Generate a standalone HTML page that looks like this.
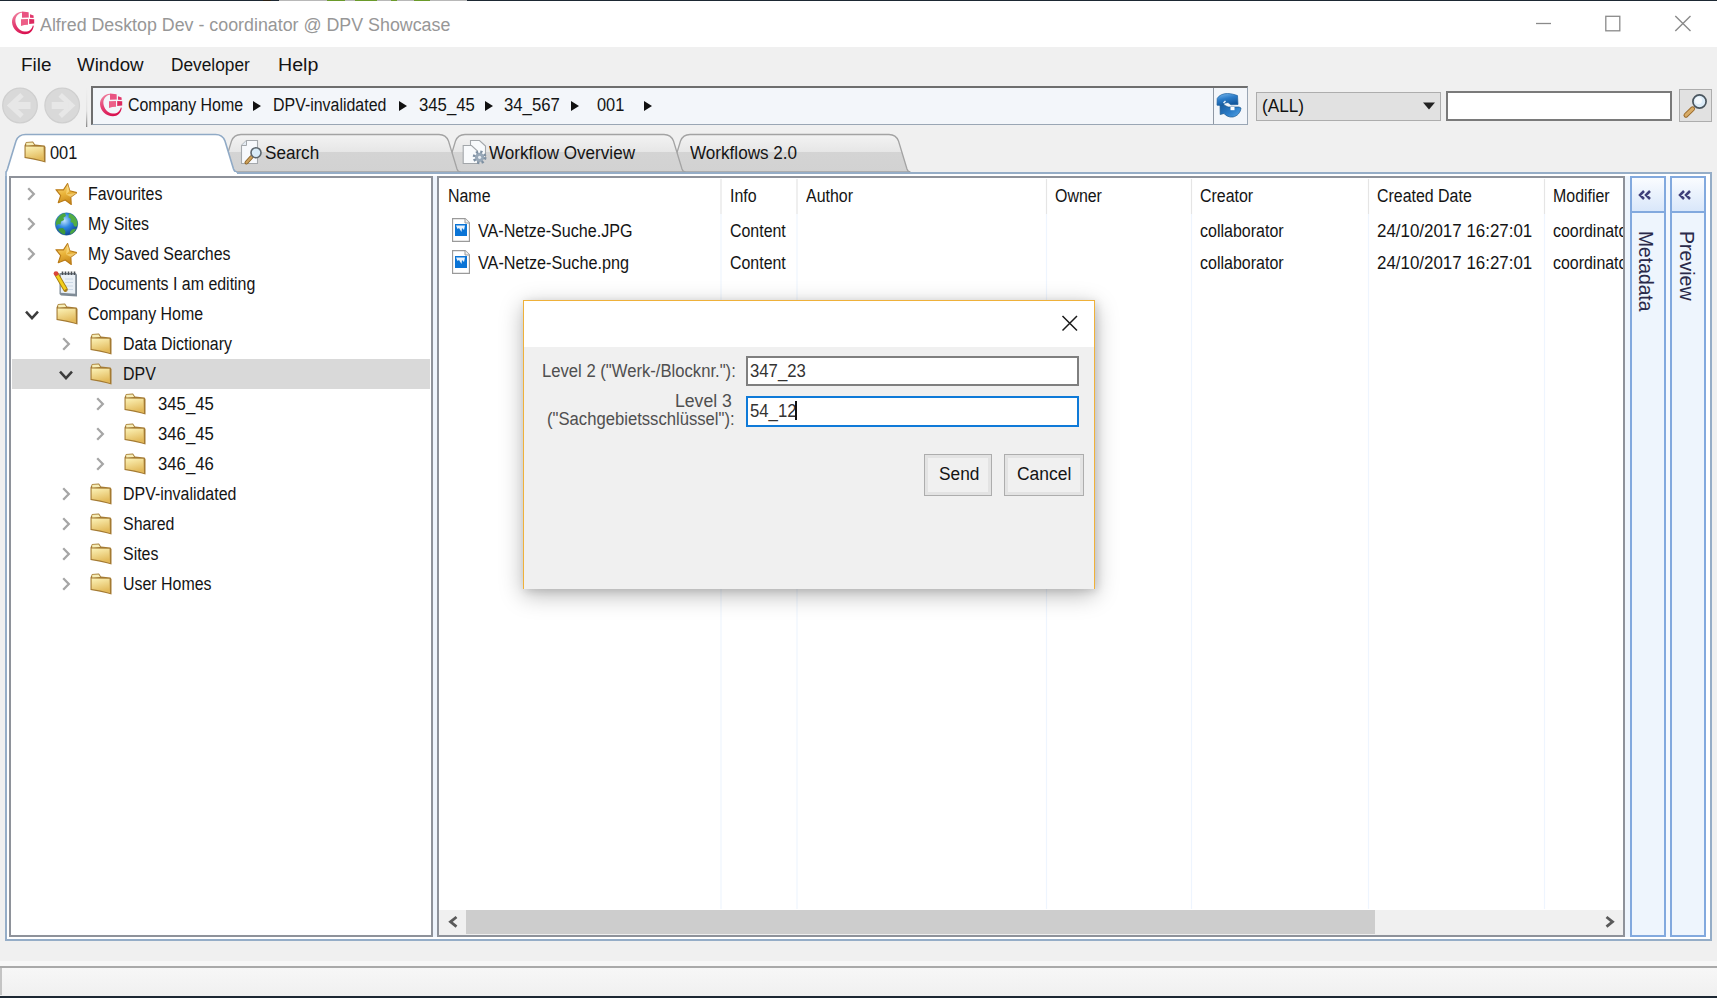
<!DOCTYPE html>
<html><head><meta charset="utf-8">
<style>
*{box-sizing:border-box;margin:0;padding:0}
html,body{width:1717px;height:998px;overflow:hidden;background:#f0f0f0;font-family:"Liberation Sans",sans-serif;color:#000}
.a{position:absolute}
.t{position:absolute;white-space:nowrap;font-size:18px;line-height:18px;transform-origin:0 0;transform:scaleX(.885);color:#141414}
svg{position:absolute;overflow:visible}
</style></head><body>
<svg width="0" height="0" style="left:0;top:0">
<defs>
 <linearGradient id="fgrad" x1="0" y1="0" x2="0.3" y2="1"><stop offset="0" stop-color="#fcf3b8"/><stop offset="1" stop-color="#e2b95a"/></linearGradient>
 <linearGradient id="tabg" x1="0" y1="0" x2="0" y2="1"><stop offset="0" stop-color="#f3f3f3"/><stop offset="0.47" stop-color="#e6e6e6"/><stop offset="0.47" stop-color="#d4d4d4"/><stop offset="1" stop-color="#d2d2d2"/></linearGradient>
 <radialGradient id="globeg" cx="0.4" cy="0.35" r="0.7"><stop offset="0" stop-color="#bfe3ff"/><stop offset="0.45" stop-color="#2d86e0"/><stop offset="1" stop-color="#0d3f8f"/></radialGradient>
 <linearGradient id="starg" x1="0" y1="0" x2="0.3" y2="1"><stop offset="0" stop-color="#fbe08a"/><stop offset="0.55" stop-color="#eab43a"/><stop offset="1" stop-color="#c98a1c"/></linearGradient>
 <linearGradient id="pinkg" x1="0.1" y1="0" x2="0.6" y2="1"><stop offset="0" stop-color="#f28aa6"/><stop offset="0.45" stop-color="#e44476"/><stop offset="1" stop-color="#d9104f"/></linearGradient>
 <linearGradient id="sideh" x1="0" y1="0" x2="0" y2="1"><stop offset="0" stop-color="#fafcff"/><stop offset="1" stop-color="#d8e6fa"/></linearGradient>
 <symbol id="folder" viewBox="0 0 22 22">
  <path d="M0.5,4.5 L2,1 L9,0.6 L11,3.6 L20.5,4.6 L21.5,6 L21.5,21.5 L17,20.3 Q9,18.2 0.5,17 Z" fill="#a47a32"/>
  <path d="M2.2,1.8 L8.6,1.4 L10.2,4 L2.2,4.4 Z" fill="#f6eeb8"/>
  <path d="M1.6,5.4 L19.6,5.8 L20,20 Q10,17.2 1.6,16 Z" fill="url(#fgrad)"/>
 </symbol>
 <symbol id="star" viewBox="0 0 22 24">
  <path d="M12.56,1.51 L14.75,8.72 L22.03,10.66 L15.85,14.97 L16.26,22.49 L10.25,17.95 L3.22,20.66 L5.68,13.54 L0.93,7.69 L8.46,7.83 Z" fill="url(#starg)" stroke="#b97a16" stroke-width="1.1" stroke-linejoin="round"/>
  <path d="M11,12.6 L12.56,1.51 L14.75,8.72 Z M11,12.6 L22.03,10.66 L15.85,14.97 Z" fill="#ffe89a" opacity="0.55"/>
 </symbol>
 <symbol id="logo" viewBox="0 0 24 24">
  <path d="M11,0.8 C5,1.2 0.6,6 1,11.5 C1.5,18 7,23.3 14,23.3 C18.5,23.3 22.2,20 22.8,14.8 L21.8,14.4 C21,18.6 17.6,20.8 13.6,20.4 C8.6,20 4.8,15.2 4.4,10.4 C4.1,6.2 6.6,2.4 11,1.8 Z" fill="url(#pinkg)"/>
  <path d="M11,0.6 L17.6,1.2 L17.8,6.6 L11,6.8 Z" fill="#e95382"/>
  <path d="M19,3.2 L22.6,4.4 L22.6,7 L19,6.8 Z" fill="#e2386c"/>
  <path d="M10,8.2 L17,8 L17,13.8 Q13,13.8 10,15 Z" fill="#ec5f88"/>
  <path d="M18.2,8 L23.2,8.2 L23.2,12.6 L18.2,12.9 Z" fill="#dd2a60"/>
 </symbol>
 <symbol id="imgdoc" viewBox="0 0 18 24">
  <path d="M0.5,0.5 L13,0.5 L17.5,5 L17.5,23.5 L0.5,23.5 Z" fill="#fff" stroke="#9a9a9a" stroke-width="1.3"/>
  <path d="M13,0.5 L13,5 L17.5,5" fill="#eee" stroke="#9a9a9a" stroke-width="1"/>
  <rect x="3" y="6" width="12" height="12" fill="#0a74d6"/>
  <path d="M4,7.5 L13,7.5 L12,12 L10,10 L9.5,14 L7,10 L5.5,11 Z" fill="#e8f2fb"/>
 </symbol>
 <symbol id="chev" viewBox="0 0 10 14">
  <path d="M2.2,1.3 L7.8,7 L2.2,12.7" fill="none" stroke="#a6a6a6" stroke-width="2.3"/>
 </symbol>
 <symbol id="chevd" viewBox="0 0 14 10">
  <path d="M1,1.6 L7,8.2 L13,1.6" fill="none" stroke="#3c3c3c" stroke-width="2.5"/>
 </symbol>
</defs></svg>

<!-- top dark line -->
<div class="a" style="left:0;top:0;width:1717px;height:1px;background:#1d2833"></div>
<div class="a" style="left:263px;top:0;width:8px;height:1px;background:#2a2014"></div>
<div class="a" style="left:279px;top:0;width:188px;height:1px;background:#b8b8b8"></div>
<div class="a" style="left:327px;top:0;width:18px;height:1px;background:#6a9a2a"></div>
<div class="a" style="left:355px;top:0;width:22px;height:1px;background:#6a9a2a"></div>
<div class="a" style="left:391px;top:0;width:6px;height:1px;background:#6a9a2a"></div>
<div class="a" style="left:414px;top:0;width:16px;height:1px;background:#6a9a2a"></div>
<!-- title bar -->
<div class="a" style="left:0;top:1px;width:1717px;height:46px;background:#fff"></div>
<svg style="left:11px;top:11px" width="24" height="24"><use href="#logo"/></svg>
<div class="t" style="left:40px;top:16px;color:#979797;transform:scaleX(.99)">Alfred Desktop Dev - coordinator @ DPV Showcase</div>
<svg style="left:1530px;top:10px" width="170" height="30">
 <path d="M6,13.5 H21" stroke="#8a8a8a" stroke-width="1.3"/>
 <rect x="75.8" y="6.3" width="14" height="14.5" fill="none" stroke="#8a8a8a" stroke-width="1.3"/>
 <path d="M145.3,6 L160.5,21 M160.5,6 L145.3,21" stroke="#8a8a8a" stroke-width="1.4"/>
</svg>

<!-- menu -->
<div class="t" style="left:21px;top:56px;transform:scaleX(1.05)">File</div>
<div class="t" style="left:77px;top:56px;transform:scaleX(1.04)">Window</div>
<div class="t" style="left:171px;top:56px;transform:scaleX(.96)">Developer</div>
<div class="t" style="left:278px;top:56px;transform:scaleX(1.09)">Help</div>

<!-- nav buttons -->
<svg style="left:0;top:85px" width="90" height="42">
 <defs><linearGradient id="sepg" x1="0" y1="0" x2="0" y2="1"><stop offset="0" stop-color="#f0f0f0"/><stop offset="0.6" stop-color="#e2e2e2"/><stop offset="1" stop-color="#8a8a8a"/></linearGradient></defs>
 <circle cx="20" cy="20.5" r="17.3" fill="#d9d9d9" stroke="#cfcfcf" stroke-width="1.2"/>
 <path d="M22,9.8 L10.5,20.5 L22,31.2" fill="none" stroke="#e7e7e7" stroke-width="5"/>
 <rect x="14" y="17" width="16.5" height="7" fill="#e7e7e7"/>
 <circle cx="62.2" cy="20.5" r="17.3" fill="#d9d9d9" stroke="#cfcfcf" stroke-width="1.2"/>
 <path d="M60.2,9.8 L71.7,20.5 L60.2,31.2" fill="none" stroke="#e7e7e7" stroke-width="5"/>
 <rect x="51.7" y="17" width="16.5" height="7" fill="#e7e7e7"/>
 <rect x="86" y="2" width="1.3" height="40" fill="url(#sepg)"/>
</svg>

<!-- address bar -->
<div class="a" style="left:91px;top:86px;width:1157px;height:39px;background:#f3f6fa;border:1px solid #9aa6b4;border-top:2px solid #6e6e6e;border-left:2px solid #6e6e6e"></div>
<div class="a" style="left:1213px;top:88px;width:1px;height:36px;background:#8f98a4"></div>
<svg style="left:99px;top:93px" width="24" height="24"><use href="#logo"/></svg>
<div class="t" style="left:128px;top:96px">Company Home</div>
<div class="t" style="left:273px;top:96px">DPV-invalidated</div>
<div class="t" style="left:419px;top:96px;transform:scaleX(0.93)">345_45</div>
<div class="t" style="left:504px;top:96px;transform:scaleX(0.93)">34_567</div>
<div class="t" style="left:597px;top:96px;transform:scaleX(0.91)">001</div>
<svg style="left:0;top:0" width="1" height="1">
 <path d="M253,101 L261,106 L253,111 Z M399,101 L407,106 L399,111 Z M485,101 L493,106 L485,111 Z M571,101 L579,106 L571,111 Z M644,101 L652,106 L644,111 Z" fill="#111"/>
</svg>
<!-- refresh icon -->
<svg style="left:1210px;top:86px" width="40" height="40">
 <defs><linearGradient id="rfg" x1="0" y1="0" x2="0.4" y2="1"><stop offset="0" stop-color="#7fbdf0"/><stop offset="0.5" stop-color="#2b7cc9"/><stop offset="1" stop-color="#13589e"/></linearGradient>
 <linearGradient id="rfg2" x1="0" y1="0" x2="1" y2="1"><stop offset="0" stop-color="#13508f"/><stop offset="0.6" stop-color="#2a7cc8"/><stop offset="1" stop-color="#5aa6e6"/></linearGradient></defs>
 <path d="M10,14.5 L13.5,13.5 L14,19 L18,21 L29,21 L31,22 C30.5,26.5 27.5,30 23,31 C19,31.6 15.5,29.5 14,27.5 L10.2,28.5 Z" fill="url(#rfg2)" stroke="#18578f" stroke-width="0.7"/>
 <path d="M7,19.2 L7.2,12.5 C9,9.2 13,7.5 17.5,7.5 C21.5,7.6 24.5,8.6 27.5,9.6 L28,18.5 L21,18.8 L18,16.5 L13,17.5 L12.5,19.5 Z" fill="url(#rfg)" stroke="#1b5f9e" stroke-width="0.7"/>
 <rect x="20.5" y="21" width="4" height="3.2" fill="#fff"/>
 <path d="M13.5,17 L15.5,15" stroke="#e8f2fb" stroke-width="1.4"/>
</svg>

<!-- combo -->
<div class="a" style="left:1256px;top:92px;width:185px;height:29px;background:#e1e1e1;border:1px solid #adadad"></div>
<div class="t" style="left:1262px;top:97px;color:#111;transform:scaleX(.955)">(ALL)</div>
<svg style="left:0;top:0" width="1" height="1"><path d="M1423,102.5 L1435,102.5 L1429,109.5 Z" fill="#222"/></svg>
<!-- search input -->
<div class="a" style="left:1446px;top:91px;width:226px;height:30px;background:#fff;border:2px solid #7a7a7a"></div>
<!-- search button -->
<div class="a" style="left:1679px;top:89px;width:33px;height:33px;background:#e1e1e1;border:1px solid #adadad"></div>
<svg style="left:1680px;top:90px" width="32" height="32">
 <path d="M6,25.2 L12.6,18.8" stroke="#9a6a2a" stroke-width="5" stroke-linecap="round"/>
 <path d="M6,25.2 L12.6,18.8" stroke="#d8ac68" stroke-width="3" stroke-linecap="round"/>
 <circle cx="19.5" cy="11.5" r="6.6" fill="#dcecf8" stroke="#4a555e" stroke-width="1.7"/>
 <circle cx="18.5" cy="10.5" r="3.5" fill="#f4f9fd"/>
</svg>

<!-- tabs -->
<svg style="left:0;top:0" width="1" height="1">
 <path d="M668.5,172 Q671.0,172 672.0,169 L680.5,141.0 Q683.0,134.5 690.0,134.5 L889.0,134.5 Q896.0,134.5 898.5,141.0 L907.0,169 Q908.0,172 910.5,172 Z" fill="url(#tabg)" stroke="#a3a3a3" stroke-width="1.3"/>
 <path d="M443.5,172 Q446.0,172 447.0,169 L455.5,141.0 Q458.0,134.5 465.0,134.5 L664.0,134.5 Q671.0,134.5 673.5,141.0 L682.0,169 Q683.0,172 685.5,172 Z" fill="url(#tabg)" stroke="#a3a3a3" stroke-width="1.3"/>
 <path d="M219.5,172 Q222.0,172 223.0,169 L231.5,141.0 Q234.0,134.5 241.0,134.5 L439.0,134.5 Q446.0,134.5 448.5,141.0 L457.0,169 Q458.0,172 460.5,172 Z" fill="url(#tabg)" stroke="#a3a3a3" stroke-width="1.3"/>
</svg>

<!-- frame -->
<div class="a" style="left:5px;top:172px;width:1707px;height:769px;background:#fff;border:2px solid #95adc7"></div>
<svg style="left:0;top:0" width="1" height="1">
 <path d="M5,176 L5,172  Q6.5,172 7.5,169 L16.0,141.0 Q18.5,134.5 25.5,134.5 L215.5,134.5 Q222.5,134.5 225.0,141.0 L233.5,169 Q234.5,172 237,172 L237,176 Z" fill="#fff" stroke="none"/>
 <path d="M6,176 L6,172  Q6.5,172 7.5,169 L16.0,141.0 Q18.5,134.5 25.5,134.5 L215.5,134.5 Q222.5,134.5 225.0,141.0 L233.5,169 Q234.5,172 237,172" fill="none" stroke="#90aac6" stroke-width="1.6"/>
</svg>
<div class="a" style="left:7px;top:172px;width:229px;height:3px;background:#fff"></div>
<svg style="left:24px;top:141px" width="22" height="22"><use href="#folder"/></svg>
<div class="t" style="left:50px;top:144px;transform:scaleX(0.91)">001</div>

<!-- tab icons & labels -->
<svg style="left:236px;top:136px" width="36" height="32">
 <path d="M10.5,4.5 L21.5,4.5 L21.5,27.5 L5.5,27.5 L5.5,9.5 Z" fill="#f7f9fc" stroke="#a4a8ac" stroke-width="1.1"/>
 <path d="M10.5,4.5 L10.5,9.5 L5.5,9.5" fill="#e4ebf2" stroke="#a4a8ac" stroke-width="1"/>
 <path d="M10.5,26.5 L15.5,21" stroke="#8a6428" stroke-width="4" stroke-linecap="round"/>
 <path d="M10.5,26.5 L15.5,21" stroke="#cda15c" stroke-width="2.2" stroke-linecap="round"/>
 <circle cx="20" cy="16.7" r="5" fill="#d8ebf8" stroke="#5e676e" stroke-width="1.6"/>
</svg>
<div class="t" style="left:265px;top:144px;transform:scaleX(0.95)">Search</div>
<svg style="left:458px;top:136px" width="36" height="32">
 <path d="M12.5,4.5 L21.5,4.5 L27.5,10 L27.5,22 L12.5,22 Z" fill="#f8fafc" stroke="#a2a6aa" stroke-width="1.1"/>
 <path d="M5.2,9.5 L13.5,9.5 L19.5,15 L19.5,27.5 L5.2,27.5 Z" fill="#f8fafc" stroke="#a2a6aa" stroke-width="1.1"/>
 <circle cx="21.6" cy="21.3" r="4.6" fill="#98a8b8"/>
 <circle cx="21.6" cy="21.3" r="5.6" fill="none" stroke="#7e90a2" stroke-width="2.6" stroke-dasharray="2.2,2.2"/>
 <circle cx="21.6" cy="21.3" r="1.6" fill="#e6ecf2"/>
</svg>
<div class="t" style="left:489px;top:144px;transform:scaleX(0.95)">Workflow Overview</div>
<div class="t" style="left:690px;top:144px;transform:scaleX(0.95)">Workflows 2.0</div>

<!-- tree panel -->
<div class="a" style="left:9px;top:176px;width:424px;height:761px;background:#fff;border:2px solid #8e929a"></div>
<div class="a" style="left:433px;top:176px;width:4px;height:761px;background:#eef4fc"></div>
<div class="a" style="left:12px;top:359px;width:418px;height:30px;background:#d9d9d9"></div>

<svg style="left:26px;top:187px" width="10" height="14"><use href="#chev"/></svg>
<svg style="left:26px;top:217px" width="10" height="14"><use href="#chev"/></svg>
<svg style="left:26px;top:247px" width="10" height="14"><use href="#chev"/></svg>
<svg style="left:24.5px;top:309.5px" width="14" height="10"><use href="#chevd"/></svg>
<svg style="left:61px;top:337px" width="10" height="14"><use href="#chev"/></svg>
<svg style="left:58.5px;top:369.5px" width="14" height="10"><use href="#chevd"/></svg>
<svg style="left:95px;top:397px" width="10" height="14"><use href="#chev"/></svg>
<svg style="left:95px;top:427px" width="10" height="14"><use href="#chev"/></svg>
<svg style="left:95px;top:457px" width="10" height="14"><use href="#chev"/></svg>
<svg style="left:61px;top:487px" width="10" height="14"><use href="#chev"/></svg>
<svg style="left:61px;top:517px" width="10" height="14"><use href="#chev"/></svg>
<svg style="left:61px;top:547px" width="10" height="14"><use href="#chev"/></svg>
<svg style="left:61px;top:577px" width="10" height="14"><use href="#chev"/></svg>

<svg style="left:55px;top:182px" width="22" height="24"><use href="#star"/></svg>
<svg style="left:55px;top:212px" width="24" height="24">
 <circle cx="11.5" cy="12" r="11.3" fill="url(#globeg)"/>
 <path d="M5,3.5 C3,5 1.2,8 0.8,11 L1.5,14 L3,12 L5.5,12.5 L6,9.5 L9,8 L8.5,5.5 L11,4 L10,1 C8.2,1.3 6.5,2.2 5,3.5 Z" fill="#4aa640"/>
 <path d="M14,1.2 C18,2.2 21,5 22.3,9 L22.5,13 L21,15 L19,14 L18,11 L15.5,10 L16,7 L13.5,5.5 Z" fill="#52ad44"/>
 <path d="M4,16.5 L8,16 L10.5,19 L10,22.8 C7,22 4.5,20 3,17.5 Z" fill="#3f9a3a"/>
 <path d="M17,17.5 L21,16.5 C20,19.5 18,21.5 15.5,22.5 L15,20 Z" fill="#4aa640"/>
 <circle cx="11.5" cy="12" r="11.3" fill="none" stroke="#2a6a8a" stroke-width="0.6" opacity="0.6"/>
</svg>
<svg style="left:55px;top:242px" width="22" height="24"><use href="#star"/></svg>
<svg style="left:50px;top:268px" width="32" height="32">
 <path d="M9.5,5 L25.5,5 L27,6.5 L27,28.5 L11,27.5 L9.5,26 Z" fill="#7f8b96"/>
 <path d="M10.8,6.5 L25.2,6.5 L25.2,25.8 L10.8,24.8 Z" fill="#eaf0f6"/>
 <path d="M15,11 H23 M15,14.5 H23 M15,18 H23 M15,21.5 H23" stroke="#c4d2e2" stroke-width="0.8"/>
 <path d="M12.5,3.5 V7 M15.5,3.5 V7 M18.5,3.5 V7 M21.5,3.5 V7 M24.5,3.5 V7" stroke="#4a4f55" stroke-width="1.6"/>
 <path d="M7,7 L15.5,21.5" stroke="#a47c10" stroke-width="4.6" stroke-linecap="round"/>
 <path d="M7,7 L15.5,21.5" stroke="#f3cf1c" stroke-width="2.8"/>
 <path d="M14.8,21 L17.5,24.5 L16,21.2 Z" fill="#c08040"/>
 <circle cx="6" cy="5.6" r="2.4" fill="#d9453a"/>
</svg>

<svg style="left:56px;top:303px" width="22" height="22"><use href="#folder"/></svg>
<svg style="left:90px;top:333px" width="22" height="22"><use href="#folder"/></svg>
<svg style="left:90px;top:363px" width="22" height="22"><use href="#folder"/></svg>
<svg style="left:124px;top:393px" width="22" height="22"><use href="#folder"/></svg>
<svg style="left:124px;top:423px" width="22" height="22"><use href="#folder"/></svg>
<svg style="left:124px;top:453px" width="22" height="22"><use href="#folder"/></svg>
<svg style="left:90px;top:483px" width="22" height="22"><use href="#folder"/></svg>
<svg style="left:90px;top:513px" width="22" height="22"><use href="#folder"/></svg>
<svg style="left:90px;top:543px" width="22" height="22"><use href="#folder"/></svg>
<svg style="left:90px;top:573px" width="22" height="22"><use href="#folder"/></svg>

<div class="t" style="left:88px;top:185px">Favourites</div>
<div class="t" style="left:88px;top:215px">My Sites</div>
<div class="t" style="left:88px;top:245px">My Saved Searches</div>
<div class="t" style="left:88px;top:275px">Documents I am editing</div>
<div class="t" style="left:88px;top:305px">Company Home</div>
<div class="t" style="left:123px;top:335px">Data Dictionary</div>
<div class="t" style="left:123px;top:365px">DPV</div>
<div class="t" style="left:158px;top:395px;transform:scaleX(0.93)">345_45</div>
<div class="t" style="left:158px;top:425px;transform:scaleX(0.93)">346_45</div>
<div class="t" style="left:158px;top:455px;transform:scaleX(0.93)">346_46</div>
<div class="t" style="left:123px;top:485px">DPV-invalidated</div>
<div class="t" style="left:123px;top:515px">Shared</div>
<div class="t" style="left:123px;top:545px">Sites</div>
<div class="t" style="left:123px;top:575px">User Homes</div>

<!-- grid panel -->
<div class="a" style="left:437px;top:176px;width:1188px;height:761px;background:#fff;border:2px solid #8e929a"></div>
<svg style="left:0;top:0" width="1" height="1">
 <g stroke="#e5e5e5" stroke-width="1.2">
  <path d="M721,179 V214 M797,179 V214 M1046.5,179 V214 M1191.5,179 V214 M1368.5,179 V214 M1544.5,179 V214"/>
 </g>
 <g stroke="#eef5fe" stroke-width="1.2">
  <path d="M721,214 V909 M797,214 V909 M1046.5,214 V909 M1191.5,214 V909 M1368.5,214 V909 M1544.5,214 V909"/>
 </g>
</svg>
<div class="t" style="left:448px;top:187px">Name</div>
<div class="t" style="left:730px;top:187px">Info</div>
<div class="t" style="left:806px;top:187px">Author</div>
<div class="t" style="left:1055px;top:187px">Owner</div>
<div class="t" style="left:1200px;top:187px">Creator</div>
<div class="t" style="left:1377px;top:187px">Created Date</div>
<div class="t" style="left:1553px;top:187px">Modifier</div>

<svg style="left:452px;top:218px" width="18" height="24"><use href="#imgdoc"/></svg>
<svg style="left:452px;top:250px" width="18" height="24"><use href="#imgdoc"/></svg>
<div class="t" style="left:478px;top:222px;transform:scaleX(0.895)">VA-Netze-Suche.JPG</div>
<div class="t" style="left:478px;top:254px;transform:scaleX(0.9)">VA-Netze-Suche.png</div>
<div class="t" style="left:730px;top:222px">Content</div>
<div class="t" style="left:730px;top:254px">Content</div>
<div class="t" style="left:1200px;top:222px;transform:scaleX(0.89)">collaborator</div>
<div class="t" style="left:1200px;top:254px;transform:scaleX(0.89)">collaborator</div>
<div class="t" style="left:1377px;top:222px;transform:scaleX(0.94)">24/10/2017 16:27:01</div>
<div class="t" style="left:1377px;top:254px;transform:scaleX(0.94)">24/10/2017 16:27:01</div>
<div class="a" style="left:1545px;top:215px;width:78px;height:60px;overflow:hidden">
 <div class="t" style="left:8px;top:7px">coordinator</div>
 <div class="t" style="left:8px;top:39px">coordinator</div>
</div>

<!-- horizontal scrollbar -->
<div class="a" style="left:439px;top:910px;width:1184px;height:25px;background:#f0f0f0"></div>
<div class="a" style="left:466px;top:910px;width:909px;height:24px;background:#cdcdcd"></div>
<svg style="left:0;top:0" width="1" height="1">
 <path d="M456.5,917 L450.5,921.8 L456.5,926.6" fill="none" stroke="#5a5a5a" stroke-width="2.8"/>
 <path d="M1606.5,917 L1612.5,921.8 L1606.5,926.6" fill="none" stroke="#5a5a5a" stroke-width="2.8"/>
</svg>

<!-- side tabs -->
<div class="a" style="left:1625px;top:176px;width:81px;height:761px;background:#eef5fd"></div>
<div class="a" style="left:1630px;top:176px;width:36px;height:761px;background:#eef5fd;border:2px solid #82a9de"></div>
<div class="a" style="left:1632px;top:178px;width:32px;height:35px;background:linear-gradient(#fafcff,#d9e7fa);border-bottom:2px solid #82a9de"></div>
<div class="a" style="left:1670px;top:176px;width:36px;height:761px;background:#eef5fd;border:2px solid #82a9de"></div>
<div class="a" style="left:1672px;top:178px;width:32px;height:35px;background:linear-gradient(#fafcff,#d9e7fa);border-bottom:2px solid #82a9de"></div>
<div class="a" style="left:1666px;top:176px;width:4px;height:761px;background:#f5f9fe"></div>
<svg style="left:0;top:0" width="1" height="1">
 <path d="M1644,191 L1640,195 L1644,199 M1650,191 L1646,195 L1650,199 M1684,191 L1680,195 L1684,199 M1690,191 L1686,195 L1690,199" fill="none" stroke="#40407a" stroke-width="2.5"/>
</svg>
<div class="t" style="left:1656px;top:231px;font-size:20px;line-height:20px;transform:rotate(90deg) scaleX(.965);color:#2a2a4a">Metadata</div>
<div class="t" style="left:1697px;top:231px;font-size:20px;line-height:20px;transform:rotate(90deg) scaleX(.977);color:#2a2a4a">Preview</div>

<!-- status bar -->
<div class="a" style="left:0;top:961px;width:1717px;height:5px;background:#f7f7f7"></div>
<div class="a" style="left:0;top:966px;width:1717px;height:2px;background:#a9a9a9"></div>
<div class="a" style="left:0;top:968px;width:1717px;height:28px;background:linear-gradient(#f7f7f7,#f0f0f0)"></div>
<div class="a" style="left:0;top:968px;width:2px;height:27px;background:#c4c4c4"></div>
<div class="a" style="left:0;top:996px;width:1717px;height:2px;background:#1d2833"></div>

<!-- dialog -->
<div class="a" style="left:523px;top:300px;width:572px;height:289px;background:#f0f0f0;border:1px solid #efb13a;border-bottom:none;box-shadow:0 6px 22px rgba(0,0,0,.28),2px 2px 8px rgba(0,0,0,.12)"></div>
<div class="a" style="left:524px;top:301px;width:570px;height:46px;background:#fff"></div>
<svg style="left:0;top:0" width="1" height="1"><path d="M1062.5,316 L1077,330.5 M1077,316 L1062.5,330.5" stroke="#1a1a1a" stroke-width="1.5"/></svg>
<div class="t" style="left:542px;top:362px;color:#4f4f4f;transform:scaleX(0.925)">Level 2 ("Werk-/Blocknr."):</div>
<div class="t" style="left:675px;top:392px;color:#4f4f4f;transform:scaleX(.98)">Level 3</div>
<div class="t" style="left:547px;top:410px;color:#4f4f4f;transform:scaleX(0.925)">("Sachgebietsschlüssel"):</div>
<div class="a" style="left:746px;top:356px;width:333px;height:30px;background:#fff;border:2px solid #7f7f7f"></div>
<div class="t" style="left:750px;top:362px;color:#333;transform:scaleX(0.93)">347_23</div>
<div class="a" style="left:746px;top:396px;width:333px;height:31px;background:#fff;border:2px solid #0f7ad8"></div>
<div class="t" style="left:750px;top:402px;color:#333;transform:scaleX(0.93)">54_12</div>
<div class="a" style="left:795px;top:401px;width:2px;height:19px;background:#111"></div>
<div class="a" style="left:924px;top:454px;width:68px;height:42px;background:#f0f0f0;border:1px solid #adadad;box-shadow:inset 0 0 0 3px #e3e3e3"></div>
<div class="a" style="left:1004px;top:454px;width:80px;height:42px;background:#f0f0f0;border:1px solid #adadad;box-shadow:inset 0 0 0 3px #e3e3e3"></div>
<div class="t" style="left:939px;top:465px;transform:scaleX(0.96)">Send</div>
<div class="t" style="left:1017px;top:465px;transform:scaleX(0.97)">Cancel</div>

</body></html>
